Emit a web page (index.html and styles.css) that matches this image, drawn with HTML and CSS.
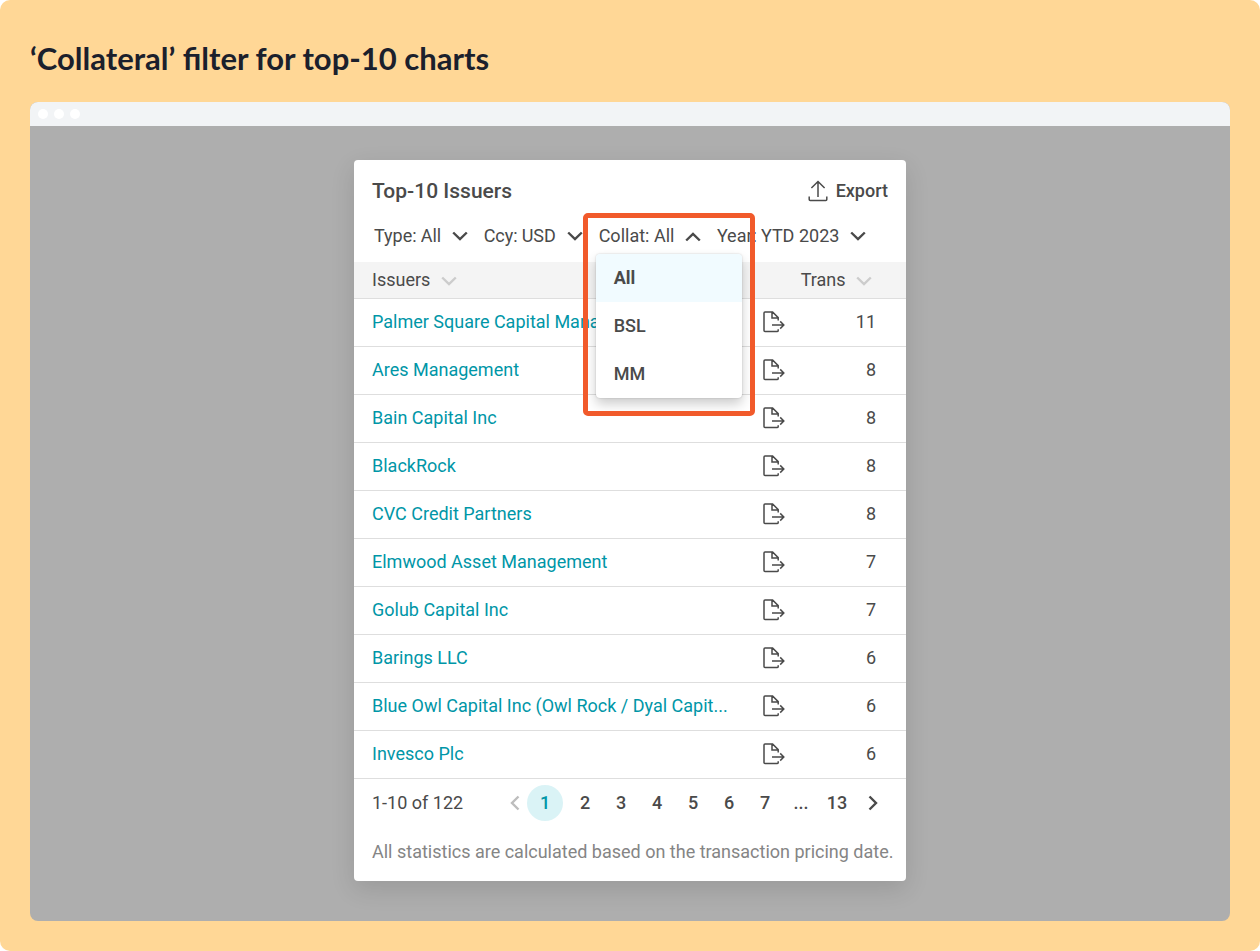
FILE: index.html
```html
<!DOCTYPE html>
<html lang="en">
<head>
    <meta charset="UTF-8">
    <meta name="viewport" content="width=device-width, initial-scale=1.0">
    <title>Top-10 Issuers</title>
    <link rel="stylesheet" href="styles.css">
</head>
<body>
    <!-- Shared icons -->
    <svg class="sprite" aria-hidden="true">
        <symbol id="chevron" viewBox="0 0 16 10">
            <path d="M1.2 1.5 L8 8 L14.8 1.5" fill="none" stroke="currentColor" stroke-width="2.4"/>
        </symbol>
        <symbol id="arrow" viewBox="0 0 10 16">
            <path d="M1.5 1.5 L8 8 L1.5 14.5" fill="none" stroke="currentColor" stroke-width="2.4"/>
        </symbol>
        <symbol id="file-export" viewBox="0 0 22 22">
            <path d="M15.2 18.2 V19.4 Q15.2 20.6 14 20.6 H2 Q1 20.6 1 19.6 V2 Q1 1 2 1 H9.6 L15.2 6.6 V9.6 M9 1.2 V7 H15 M9 14 H20.5 M17.2 10.4 L20.8 14 L17.2 17.6" fill="none" stroke="currentColor" stroke-width="1.5"/>
        </symbol>
    </svg>

    <main class="page">
        <h1>‘Collateral’ filter for top-10 charts</h1>

        <div class="browser">
            <div class="browser-bar">
                <span class="dot"></span>
                <span class="dot"></span>
                <span class="dot"></span>
            </div>

            <div class="browser-body">
                <section class="card">
                    <div class="card-header">
                        <h2>Top-10 Issuers</h2>
                        <button class="export-button" type="button">
                            <svg width="20" height="22" viewBox="0 0 20 22" aria-hidden="true">
                                <path d="M10 17 V1.5 M3.4 8 L10 1.5 L16.6 8 M1.2 16.5 V19.5 Q1.2 20.5 2.2 20.5 H17.8 Q18.8 20.5 18.8 19.5 V16.5" fill="none" stroke="currentColor" stroke-width="1.5"/>
                            </svg>
                            Export
                        </button>
                    </div>

                    <div class="filters">
                        <div class="filter">
                            <label for="type">Type:</label>
                            <select id="type">
                                <option>All</option>
                            </select>
                            <svg class="chevron" aria-hidden="true"><use href="#chevron"/></svg>
                        </div>
                        <div class="filter">
                            <label for="ccy">Ccy:</label>
                            <select id="ccy">
                                <option>USD</option>
                            </select>
                            <svg class="chevron" aria-hidden="true"><use href="#chevron"/></svg>
                        </div>
                        <div class="filter">
                            <button class="filter-button" id="collat" type="button" aria-haspopup="listbox" aria-expanded="true">
                                Collat: <span id="collatValue">All</span>
                                <svg class="chevron up" aria-hidden="true"><use href="#chevron"/></svg>
                            </button>
                            <ul class="menu" id="collatMenu" role="listbox" aria-labelledby="collat">
                                <li class="selected" role="option" aria-selected="true">All</li>
                                <li role="option" aria-selected="false">BSL</li>
                                <li role="option" aria-selected="false">MM</li>
                            </ul>
                            <div class="highlight"></div>
                        </div>
                        <div class="filter">
                            <label for="year">Year:</label>
                            <select id="year">
                                <option>YTD 2023</option>
                            </select>
                            <svg class="chevron" aria-hidden="true"><use href="#chevron"/></svg>
                        </div>
                    </div>

                    <table>
                        <thead>
                            <tr>
                                <th>Issuers <svg class="chevron" aria-hidden="true"><use href="#chevron"/></svg></th>
                                <th class="trans" colspan="2">Trans <svg class="chevron" aria-hidden="true"><use href="#chevron"/></svg></th>
                            </tr>
                        </thead>
                        <tbody>
                            <tr>
                                <td><a href="#">Palmer Square Capital Management</a></td>
                                <td class="icon"><svg class="file" aria-hidden="true"><use href="#file-export"/></svg></td>
                                <td class="count">11</td>
                            </tr>
                            <tr>
                                <td><a href="#">Ares Management</a></td>
                                <td class="icon"><svg class="file" aria-hidden="true"><use href="#file-export"/></svg></td>
                                <td class="count">8</td>
                            </tr>
                            <tr>
                                <td><a href="#">Bain Capital Inc</a></td>
                                <td class="icon"><svg class="file" aria-hidden="true"><use href="#file-export"/></svg></td>
                                <td class="count">8</td>
                            </tr>
                            <tr>
                                <td><a href="#">BlackRock</a></td>
                                <td class="icon"><svg class="file" aria-hidden="true"><use href="#file-export"/></svg></td>
                                <td class="count">8</td>
                            </tr>
                            <tr>
                                <td><a href="#">CVC Credit Partners</a></td>
                                <td class="icon"><svg class="file" aria-hidden="true"><use href="#file-export"/></svg></td>
                                <td class="count">8</td>
                            </tr>
                            <tr>
                                <td><a href="#">Elmwood Asset Management</a></td>
                                <td class="icon"><svg class="file" aria-hidden="true"><use href="#file-export"/></svg></td>
                                <td class="count">7</td>
                            </tr>
                            <tr>
                                <td><a href="#">Golub Capital Inc</a></td>
                                <td class="icon"><svg class="file" aria-hidden="true"><use href="#file-export"/></svg></td>
                                <td class="count">7</td>
                            </tr>
                            <tr>
                                <td><a href="#">Barings LLC</a></td>
                                <td class="icon"><svg class="file" aria-hidden="true"><use href="#file-export"/></svg></td>
                                <td class="count">6</td>
                            </tr>
                            <tr>
                                <td><a href="#">Blue Owl Capital Inc (Owl Rock / Dyal Capit...</a></td>
                                <td class="icon"><svg class="file" aria-hidden="true"><use href="#file-export"/></svg></td>
                                <td class="count">6</td>
                            </tr>
                            <tr>
                                <td><a href="#">Invesco Plc</a></td>
                                <td class="icon"><svg class="file" aria-hidden="true"><use href="#file-export"/></svg></td>
                                <td class="count">6</td>
                            </tr>
                        </tbody>
                    </table>

                    <div class="table-footer">
                        <span>1-10 of 122</span>
                        <nav class="pagination" aria-label="Pages">
                            <button class="prev" type="button" aria-label="Previous page" disabled>
                                <svg class="arrow" aria-hidden="true"><use href="#arrow"/></svg>
                            </button>
                            <button class="current" type="button" aria-current="page">1</button>
                            <button type="button">2</button>
                            <button type="button">3</button>
                            <button type="button">4</button>
                            <button type="button">5</button>
                            <button type="button">6</button>
                            <button type="button">7</button>
                            <span class="dots">...</span>
                            <button type="button">13</button>
                            <button type="button" aria-label="Next page">
                                <svg class="arrow" aria-hidden="true"><use href="#arrow"/></svg>
                            </button>
                        </nav>
                    </div>

                    <p class="note">All statistics are calculated based on the transaction pricing date.</p>
                </section>
            </div>
        </div>
    </main>

    <script>
        var collat = document.getElementById('collat');
        var menu = document.getElementById('collatMenu');
        var items = menu.getElementsByTagName('li');

        collat.onclick = function () {
            menu.hidden = !menu.hidden;
            collat.setAttribute('aria-expanded', String(!menu.hidden));
        };

        for (var i = 0; i < items.length; i++) {
            items[i].onclick = function () {
                for (var j = 0; j < items.length; j++) {
                    items[j].classList.toggle('selected', items[j] === this);
                    items[j].setAttribute('aria-selected', String(items[j] === this));
                }
                document.getElementById('collatValue').textContent = this.textContent;
                collat.onclick();
            };
        }
    </script>
</body>
</html>
```

FILE: styles.css
```css
* {
    box-sizing: border-box;
}
body {
    margin: 0;
    background-color: #fff;
    color: #4a4a4a;
    font-family: Roboto, Arial, sans-serif;
    font-size: 18px;
    line-height: 24px;
}
button,
select {
    padding: 0;
    border: none;
    background: none;
    color: inherit;
    font: inherit;
    cursor: pointer;
}
.sprite {
    position: absolute;
    width: 0;
    height: 0;
}
.page {
    display: flex;
    flex-direction: column;
    min-height: 100vh;
    padding: 38px 30px 30px;
    border-radius: 10px;
    background-color: #ffd796;
}
h1 {
    margin: 0 0 24px;
    color: #1b202c;
    font-family: Lato, "Open Sans", sans-serif;
    font-size: 31px;
    font-weight: 700;
    line-height: 40px;
}

/* Browser window */
.browser {
    display: flex;
    flex-direction: column;
    flex: 1;
    border-radius: 8px;
    background-color: #aeaeae;
    overflow: hidden;
}
.browser-bar {
    display: flex;
    align-items: center;
    gap: 6px;
    height: 24px;
    padding: 0 8px;
    background-color: #f2f4f6;
}
.dot {
    width: 10px;
    height: 10px;
    border-radius: 50%;
    background-color: #fff;
}
.browser-body {
    padding: 34px 20px 40px;
}

/* Card */
.card {
    max-width: 552px;
    margin: 0 auto;
    padding-bottom: 17px;
    border-radius: 4px;
    background-color: #fff;
    box-shadow: 0 8px 24px rgba(0, 0, 0, 0.12);
}
.card-header {
    display: flex;
    justify-content: space-between;
    align-items: center;
    padding: 17px 18px 15px;
}
h2 {
    margin: 0;
    font-size: 21px;
    font-weight: 500;
    line-height: 28px;
}
.export-button {
    display: flex;
    align-items: center;
    gap: 8px;
    font-weight: 500;
}

/* Filters */
.filters {
    display: flex;
    gap: 16px;
    padding: 4px 20px 14px;
}
.filter {
    position: relative;
    display: flex;
    align-items: center;
    white-space: nowrap;
}
.filter select {
    margin-left: 4px;
    margin-right: -16px;
    padding-right: 26px;
    appearance: none;
}
.filter .chevron {
    pointer-events: none;
}
.filter-button .chevron {
    margin-left: 6px;
}
.chevron {
    width: 16px;
    height: 10px;
}
.up {
    transform: rotate(180deg);
}
.menu {
    position: absolute;
    top: 30px;
    left: -3px;
    z-index: 1;
    width: 146px;
    margin: 0;
    padding: 0;
    border-radius: 4px;
    background-color: #fff;
    box-shadow: 0 6px 12px rgba(0, 0, 0, 0.2), 0 0 2px rgba(0, 0, 0, 0.2);
    font-weight: 500;
    line-height: 48px;
    list-style-type: none;
    overflow: hidden;
}
.menu li {
    padding: 0 18px;
    cursor: pointer;
}
.menu .selected {
    background-color: #f1fbff;
    font-weight: 700;
}
.highlight {
    position: absolute;
    top: -11px;
    left: -16px;
    z-index: 2;
    width: 172px;
    height: 203px;
    border: 5px solid #f15a2b;
    border-radius: 5px;
    pointer-events: none;
}

/* Table */
table {
    width: 100%;
    border-collapse: separate;
    border-spacing: 0;
}
th,
td {
    height: 48px;
    padding: 0 0 1px;
    border-bottom: 1px solid #dedede;
    text-align: left;
}
th {
    height: 37px;
    padding: 0;
    background-color: #f4f4f4;
    font-weight: 400;
}
th .chevron {
    margin-left: 6px;
    color: #ccc;
}
th:first-child,
td:first-child {
    padding-left: 18px;
    white-space: nowrap;
}
th.trans {
    padding-right: 34px;
    text-align: right;
}
td a {
    color: #0096a7;
    text-decoration: none;
}
td a:hover {
    text-decoration: underline;
}
.icon {
    width: 53px;
}
.file {
    display: block;
    width: 22px;
    height: 22px;
}
.count {
    width: 90px;
    padding-right: 30px;
    text-align: right;
}

/* Footer */
.table-footer {
    display: flex;
    justify-content: space-between;
    align-items: center;
    height: 47px;
    padding: 0 15px 0 18px;
}
.pagination {
    display: flex;
    align-items: center;
    font-weight: 500;
}
.pagination button,
.dots {
    width: 36px;
    height: 36px;
    line-height: 36px;
    text-align: center;
}
.pagination .prev {
    width: 24px;
    color: #bdbdbd;
}
.prev .arrow {
    transform: rotate(180deg);
}
.pagination .current {
    margin-right: 4px;
    border-radius: 50%;
    background-color: #daf3f6;
    color: #0096a7;
}
.arrow {
    display: block;
    width: 10px;
    height: 16px;
    margin: 0 auto;
}
.note {
    margin: 14px 0 0;
    padding: 0 0 0 18px;
    color: #858585;
}
```
